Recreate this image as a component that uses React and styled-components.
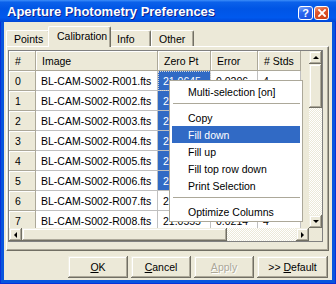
import React from 'react';
import styled, { createGlobalStyle, css } from 'styled-components';

const FONT = `"Liberation Sans", Arial, sans-serif`;
const BEIGE = '#ECE9D8';

const Global = createGlobalStyle`
  html, body { margin: 0; padding: 0; background: #fff; }
  body { font-family: ${FONT}; }
  * { box-sizing: border-box; }
`;

const Window = styled.div`
  position: relative;
  width: 336px;
  height: 284px;
  display: flex;
  flex-direction: column;
  background: #0855DD;
  box-shadow: inset 1px 0 #0831D9, inset -1px 0 #0831D9, inset 0 -1px #0831D9;
  font-family: ${FONT};
  font-size: 10.5px;
  color: #000;
  overflow: hidden;
`;

const TitleBar = styled.div`
  height: 22px;
  flex: none;
  display: flex;
  align-items: flex-start;
  padding: 0 7px 0 7px;
  background: linear-gradient(180deg, #3D8EF9 0%, #0B61EA 10%, #0055E5 40%, #0059EE 80%, #0046D6 100%);
`;

const Title = styled.div`
  flex: 1;
  padding-top: 4px;
  line-height: 15px;
  color: #fff;
  font-weight: bold;
  font-size: 13px;
  text-shadow: 1px 1px #0F1F8C;
  white-space: nowrap;
`;

const CaptionButtons = styled.div`
  display: flex;
  gap: 1px;
  margin-top: 6px;
`;

const CaptionButton = styled.div`
  width: 15px;
  height: 14px;
  border: 1px solid #fff;
  border-radius: 3px;
  display: flex;
  align-items: center;
  justify-content: center;
  color: #fff;
  font-weight: bold;
  font-size: 11px;
  line-height: 1;
  ${(p) =>
    p.$variant === 'close'
      ? css`
          background: linear-gradient(160deg, #F0A080 0%, #E0572E 35%, #CC4015 100%);
        `
      : css`
          background: linear-gradient(160deg, #7FA8FA 0%, #2C66F0 40%, #1B50DE 100%);
        `}
`;

const Client = styled.div`
  flex: 1;
  margin: 0 4px 4px;
  background: ${BEIGE};
  display: flex;
  flex-direction: column;
  padding: 4px 0 2px;
`;

const TabStrip = styled.div`
  height: 20px;
  flex: none;
  display: flex;
  align-items: flex-end;
  padding-left: 2px;
`;

const Tab = styled.div`
  position: relative;
  width: ${(p) => p.$w}px;
  height: 16px;
  padding-left: 7px;
  display: flex;
  align-items: center;
  white-space: nowrap;
  background: ${BEIGE};
  border-top: 1px solid #fff;
  border-left: 1px solid #fff;
  border-right: 1px solid #716F64;
  box-shadow: inset -1px 0 #ACA899;
  border-radius: 2px 2px 0 0;
  ${(p) =>
    p.$active &&
    css`
      height: 21px;
      width: ${p.$w + 4}px;
      margin: 0 -2px -1px;
      padding-left: 8px;
      padding-bottom: 3px;
      z-index: 1;
    `}
`;

const Panel = styled.div`
  margin: 0 3px 0 2px;
  height: 205px;
  flex: none;
  border-top: 1px solid #fff;
  border-left: 1px solid #fff;
  border-right: 1px solid #716F64;
  border-bottom: 1px solid #716F64;
  box-shadow: inset -1px -1px #ACA899;
  padding: 3px 5px 8px 1px;
`;

const Grid = styled.div`
  width: 315px;
  height: 192px;
  border: 1px solid #808080;
  display: grid;
  grid-template-columns: 300px 13px;
  grid-template-rows: 177px 13px;
  background: ${BEIGE};
`;

const Table = styled.div`
  overflow: hidden;
  display: flex;
  flex-direction: column;
  background: ${BEIGE};
`;

const Row = styled.div`
  display: flex;
  height: 20px;
  flex: none;
`;

const Cell = styled.div`
  width: ${(p) => p.$w}px;
  flex: none;
  height: 20px;
  display: flex;
  align-items: center;
  padding-left: 5px;
  white-space: nowrap;
  overflow: hidden;
  border-right: 1px solid #C0C0C0;
  border-bottom: 1px solid #C0C0C0;
  background: #fff;
  ${(p) =>
    p.$kind === 'head' &&
    css`
      background: ${BEIGE};
      padding-left: 6px;
      border-right-color: #ACA899;
      border-bottom-color: #ACA899;
      box-shadow: inset 1px 1px #fff;
    `}
  ${(p) =>
    p.$kind === 'sel' &&
    css`
      background: #316AC5;
      color: #fff;
    `}
  ${(p) =>
    p.$focus &&
    css`
      outline: 1px dotted #D8D8D8;
      outline-offset: -1px;
    `}
`;

const button3d = css`
  background: ${BEIGE};
  box-shadow: inset -1px -1px #716F64, inset 1px 1px #F1EFE2, inset -2px -2px #ACA899, inset 2px 2px #fff;
`;

const VScroll = styled.div`
  display: flex;
  flex-direction: column;
`;

const HScroll = styled.div`
  display: flex;
`;

const ArrowButton = styled.div`
  width: 13px;
  height: 13px;
  flex: none;
  display: flex;
  align-items: center;
  justify-content: center;
  ${button3d}
`;

const Thumb = styled.div`
  flex: none;
  ${(p) => (p.$vertical ? `height: ${p.$len}px;` : `width: ${p.$len}px;`)}
  ${button3d}
`;

const Track = styled.div`
  flex: 1;
  background: repeating-conic-gradient(#fff 0% 25%, ${BEIGE} 0% 50%) 0 0 / 2px 2px;
`;

const Corner = styled.div`
  background: ${BEIGE};
`;

const ButtonRow = styled.div`
  display: flex;
  justify-content: flex-end;
  gap: 3px;
  margin-top: 5px;
  padding-right: 4px;
`;

const Button = styled.div`
  width: ${(p) => p.$w}px;
  height: 22px;
  display: flex;
  align-items: center;
  justify-content: center;
  white-space: nowrap;
  font-size: 10.5px;
  ${button3d}
  ${(p) =>
    p.$disabled &&
    css`
      color: #ACA899;
      text-shadow: 1px 1px #fff;
    `}
`;

const Menu = styled.div`
  position: absolute;
  left: 169px;
  top: 80px;
  width: 134px;
  height: 142px;
  background: #fff;
  border: 1px solid #ACA899;
  padding: 2px 2px 1px;
  z-index: 5;
`;

const MenuItem = styled.div`
  height: 17px;
  display: flex;
  align-items: center;
  padding-left: 16px;
  white-space: nowrap;
  ${(p) =>
    p.$hot &&
    css`
      background: #316AC5;
      color: #fff;
    `}
`;

const Separator = styled.div`
  height: 1px;
  margin: 3px 0 5px 1px;
  background: #ACA899;
`;

const Arrow = ({ dir }) => {
  const pts = {
    up: '1,4 4,1 7,4',
    down: '1,1 4,4 7,1',
    left: '4,1 1,4 4,7',
    right: '1,1 4,4 1,7',
  }[dir];
  const vertical = dir === 'up' || dir === 'down';
  return (
    <svg width={vertical ? 8 : 5} height={vertical ? 5 : 8} viewBox={vertical ? '0 0 8 5' : '0 0 5 8'}>
      <polygon points={pts} fill="#000" />
    </svg>
  );
};

const COLS = [27, 122, 53, 47, 43];
const HEAD = ['#', 'Image', 'Zero Pt', 'Error', '# Stds'];
const ZP = ['21.0645', '21.0512', '21.0733', '21.0589', '21.0671', '21.0498', '21.0602', '21.0555'];
// Rows 1-6 of Error and # Stds lie fully under the popup menu in the reference.
const ER = ['0.0206', '', '', '', '', '', '', '0.0214'];
const ST = ['4', '', '', '', '', '', '', '4'];

export default function App() {
  return (
    <>
      <Global />
      <Window>
        <TitleBar>
          <Title>Aperture Photometry Preferences</Title>
          <CaptionButtons>
            <CaptionButton>?</CaptionButton>
            <CaptionButton $variant="close">
              <svg width="8" height="8" viewBox="0 0 8 8">
                <path d="M1 1 L7 7 M7 1 L1 7" stroke="#fff" strokeWidth="1.8" strokeLinecap="square" />
              </svg>
            </CaptionButton>
          </CaptionButtons>
        </TitleBar>
        <Client>
          <TabStrip>
            <Tab $w={44}>Points</Tab>
            <Tab $w={59} $active>Calibration</Tab>
            <Tab $w={42}>Info</Tab>
            <Tab $w={43}>Other</Tab>
          </TabStrip>
          <Panel>
            <Grid>
              <Table>
                <Row>
                  {HEAD.map((h, i) => (
                    <Cell key={h} $w={COLS[i]} $kind="head">{h}</Cell>
                  ))}
                </Row>
                {ZP.map((z, r) => (
                  <Row key={r}>
                    <Cell $w={COLS[0]} $kind="head">{r}</Cell>
                    <Cell $w={COLS[1]}>{`BL-CAM-S002-R00${r + 1}.fts`}</Cell>
                    <Cell $w={COLS[2]} $kind={r <= 5 ? 'sel' : undefined} $focus={r === 0}>{z}</Cell>
                    <Cell $w={COLS[3]}>{ER[r]}</Cell>
                    <Cell $w={COLS[4]}>{ST[r]}</Cell>
                  </Row>
                ))}
              </Table>
              <VScroll>
                <ArrowButton><Arrow dir="up" /></ArrowButton>
                <Thumb $vertical $len={44} />
                <Track />
                <ArrowButton><Arrow dir="down" /></ArrowButton>
              </VScroll>
              <HScroll>
                <ArrowButton><Arrow dir="left" /></ArrowButton>
                <Thumb $len={205} />
                <Track />
                <ArrowButton><Arrow dir="right" /></ArrowButton>
              </HScroll>
              <Corner />
            </Grid>
          </Panel>
          <ButtonRow>
            <Button $w={60}><u>O</u>K</Button>
            <Button $w={60}><u>C</u>ancel</Button>
            <Button $w={60} $disabled><u>A</u>pply</Button>
            <Button $w={71}>&gt;&gt;&nbsp;<u>D</u>efault</Button>
          </ButtonRow>
        </Client>
        <Menu>
          <MenuItem>Multi-selection [on]</MenuItem>
          <Separator />
          <MenuItem>Copy</MenuItem>
          <MenuItem $hot>Fill down</MenuItem>
          <MenuItem>Fill up</MenuItem>
          <MenuItem>Fill top row down</MenuItem>
          <MenuItem>Print Selection</MenuItem>
          <Separator />
          <MenuItem>Optimize Columns</MenuItem>
        </Menu>
      </Window>
    </>
  );
}
